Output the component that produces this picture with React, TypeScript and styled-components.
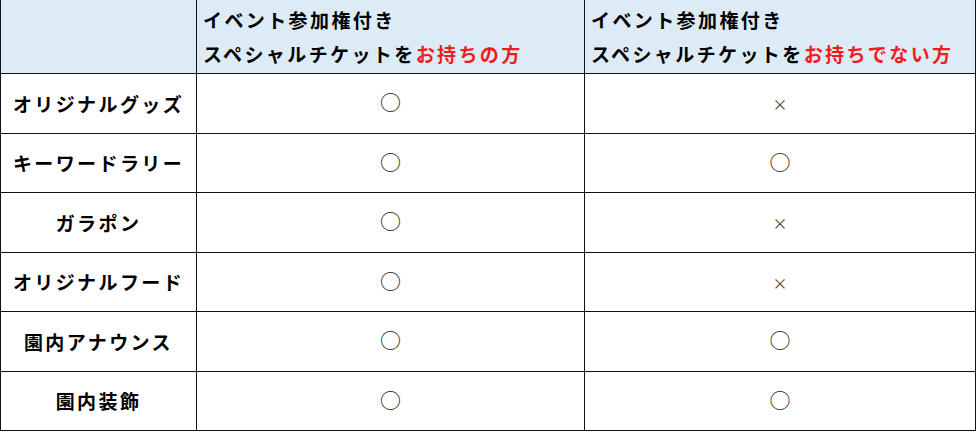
import React from "react"
import styled, { createGlobalStyle } from "styled-components"

const GlobalStyle = createGlobalStyle`
  html, body {
    margin: 0;
    padding: 0;
    background: #ffffff;
  }
  body {
    font-family: "Noto Sans CJK JP", "Noto Sans", sans-serif;
    color: #000;
  }
`

const Table = styled.table`
  border-collapse: collapse;
  table-layout: fixed;
  width: 975px;
  margin-top: -1px;
`

const HeadCell = styled.th`
  background: #ddebf7;
  border: 1.5px solid #111;
  height: 72px;
  padding: 1px 6px 0;
  text-align: left;
  vertical-align: middle;
  font-size: 19px;
  font-weight: 700;
  letter-spacing: 2.4px;
  line-height: 34px;
  white-space: nowrap;
`

const Red = styled.span`
  color: #f01c1c;
`

const LabelCell = styled.th`
  border: 1.5px solid #111;
  height: 58.5px;
  padding: 0;
  text-align: center;
  font-size: 19px;
  font-weight: 700;
  letter-spacing: 2.4px;
  white-space: nowrap;
`

const MarkCell = styled.td`
  border: 1.5px solid #111;
  text-align: center;
  padding: 0;
`

const Mark = styled.span<{ $yes: boolean }>`
  display: inline-block;
  font-family: "Noto Sans CJK JP", sans-serif;
  font-size: ${(p) => (p.$yes ? "21px" : "15px")};
  color: ${(p) => (p.$yes ? "#222" : "#444")};
  font-weight: 400;
  line-height: 1;
`

const rows: [string, boolean, boolean][] = [
  ["オリジナルグッズ", true, false],
  ["キーワードラリー", true, true],
  ["ガラポン", true, false],
  ["オリジナルフード", true, false],
  ["園内アナウンス", true, true],
  ["園内装飾", true, true],
]

export default function App() {
  return (
    <>
      <GlobalStyle />
      <Table>
        <colgroup>
          <col style={{ width: 196 }} />
          <col style={{ width: 388 }} />
          <col style={{ width: 391 }} />
        </colgroup>
        <thead>
          <tr>
            <HeadCell />
            <HeadCell>
              イベント参加権付き
              <br />
              スペシャルチケットを<Red>お持ちの方</Red>
            </HeadCell>
            <HeadCell>
              イベント参加権付き
              <br />
              スペシャルチケットを<Red>お持ちでない方</Red>
            </HeadCell>
          </tr>
        </thead>
        <tbody>
          {rows.map(([label, a, b]) => (
            <tr key={label}>
              <LabelCell>{label}</LabelCell>
              <MarkCell>
                <Mark $yes={a}>{a ? "○" : "×"}</Mark>
              </MarkCell>
              <MarkCell>
                <Mark $yes={b}>{b ? "○" : "×"}</Mark>
              </MarkCell>
            </tr>
          ))}
        </tbody>
      </Table>
    </>
  )
}
